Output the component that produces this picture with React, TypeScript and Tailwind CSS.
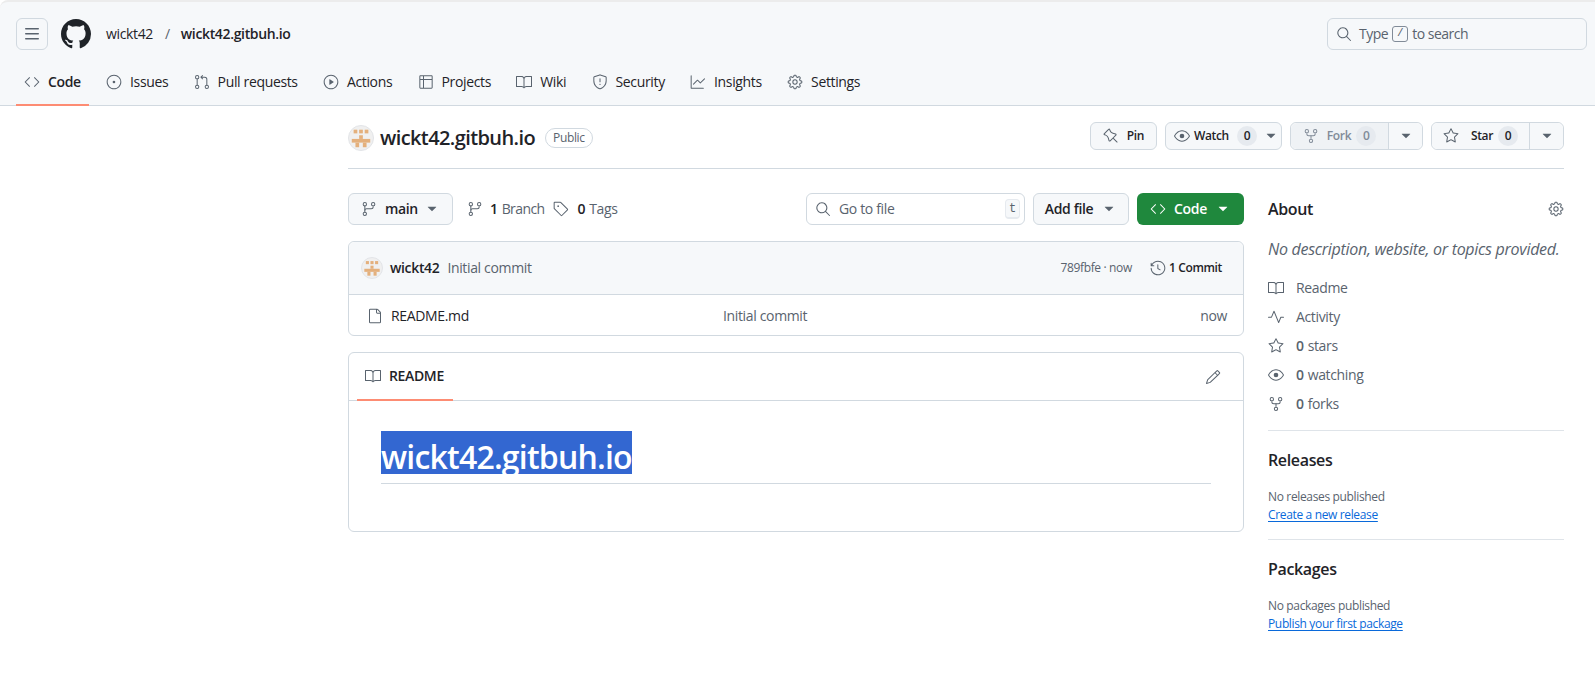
import {
  GoBook,
  GoCode,
  GoEye,
  GoFile,
  GoGear,
  GoGitBranch,
  GoGitPullRequest,
  GoGraph,
  GoHistory,
  GoIssueOpened,
  GoPencil,
  GoPin,
  GoPlay,
  GoPulse,
  GoRepoForked,
  GoSearch,
  GoShield,
  GoStar,
  GoTable,
  GoTag,
  GoTriangleDown,
} from 'react-icons/go';

const tabs = [
  { label: 'Code', icon: GoCode, active: true },
  { label: 'Issues', icon: GoIssueOpened },
  { label: 'Pull requests', icon: GoGitPullRequest },
  { label: 'Actions', icon: GoPlay },
  { label: 'Projects', icon: GoTable },
  { label: 'Wiki', icon: GoBook },
  { label: 'Security', icon: GoShield },
  { label: 'Insights', icon: GoGraph },
  { label: 'Settings', icon: GoGear },
];

const aboutRows = [
  { icon: GoBook, count: '', label: 'Readme' },
  { icon: GoPulse, count: '', label: 'Activity' },
  { icon: GoStar, count: '0', label: 'stars' },
  { icon: GoEye, count: '0', label: 'watching' },
  { icon: GoRepoForked, count: '0', label: 'forks' },
];

function GithubMark() {
  return (
    <svg viewBox="0 0 16 16" fill="currentColor" className="mr-[15px] ml-[13px] h-[30px] w-[30px] text-[#1f2328]">
      <path d="M8 0C3.58 0 0 3.58 0 8c0 3.54 2.29 6.53 5.47 7.59.4.07.55-.17.55-.38 0-.19-.01-.82-.01-1.49-2.01.37-2.53-.49-2.69-.94-.09-.23-.48-.94-.82-1.13-.28-.15-.68-.52-.01-.53.63-.01 1.08.58 1.23.82.72 1.21 1.87.87 2.33.66.07-.52.28-.87.51-1.07-1.78-.2-3.64-.89-3.64-3.95 0-.87.31-1.59.82-2.15-.08-.2-.36-1.02.08-2.12 0 0 .67-.21 2.2.82.64-.18 1.32-.27 2-.27.68 0 1.36.09 2 .27 1.53-1.04 2.2-.82 2.2-.82.44 1.1.16 1.92.08 2.12.51.56.82 1.27.82 2.15 0 3.07-1.87 3.75-3.65 3.95.29.25.54.73.54 1.48 0 1.07-.01 1.93-.01 2.2 0 .21.15.46.55.38A8.013 8.013 0 0016 8c0-4.42-3.58-8-8-8z" />
    </svg>
  );
}

function Avatar({ size }: { size: string }) {
  return (
    <svg viewBox="0 0 26 26" className={`${size} shrink-0 rounded-full border border-[#e3e5e8] bg-[#f0f0f0]`}>
      <g fill="#e4b07c">
        <rect x="5" y="4" width="4" height="4" />
        <rect x="11" y="4" width="4" height="4" />
        <rect x="17" y="4" width="4" height="4" />
        <rect x="11" y="10" width="4" height="4" />
        <rect x="3" y="14" width="20" height="4" />
        <rect x="7" y="18" width="4" height="5" />
        <rect x="15" y="18" width="4" height="5" />
      </g>
    </svg>
  );
}

function Counter({ muted }: { muted?: boolean }) {
  return (
    <span
      className={`flex h-5 w-5 items-center justify-center rounded-full bg-[#e6eaef] text-xs font-semibold ${
        muted ? 'text-[#818b98]' : 'text-[#1f2328]'
      }`}
    >
      0
    </span>
  );
}

function Caret({ className = 'text-[#59636e]' }: { className?: string }) {
  return <GoTriangleDown className={`h-4 w-4 ${className}`} />;
}

export default function App() {
  return (
    <div className="h-[687px] overflow-hidden bg-white font-['Open_Sans','Noto_Sans',sans-serif] text-sm tracking-[-0.35px] text-[#1f2328]">
      {/* Top bar */}
      <header className="h-[106px] rounded-tl-lg border-t-2 border-b border-t-[#ececec] border-b-[#d1d9e0] bg-[#f6f8fa]">
        <div className="mt-4 flex h-8 items-center justify-between pr-2 pl-4">
          <div className="flex items-center">
            <button className="flex h-8 w-8 items-center justify-center rounded-md border border-[#d1d9e0] text-[#59636e]">
              <svg viewBox="0 0 16 16" fill="currentColor" className="h-4 w-4">
                <path d="M1 2.75A.75.75 0 0 1 1.75 2h12.5a.75.75 0 0 1 0 1.5H1.75A.75.75 0 0 1 1 2.75Zm0 5A.75.75 0 0 1 1.75 7h12.5a.75.75 0 0 1 0 1.5H1.75A.75.75 0 0 1 1 7.75ZM1.75 12h12.5a.75.75 0 0 1 0 1.5H1.75a.75.75 0 0 1 0-1.5Z" />
              </svg>
            </button>
            <GithubMark />
            <span>wickt42</span>
            <span className="mr-[11px] ml-[12px] text-[#59636e]">/</span>
            <span className="font-semibold">wickt42.gitbuh.io</span>
          </div>
          <div className="flex h-8 w-[260px] items-center rounded-md border border-[#d1d9e0] pl-2 tracking-[-0.5px] text-[#59636e]">
            <GoSearch className="mr-[7px] h-4 w-4" />
            <span>Type</span>
            <kbd className="mx-1 flex h-4 w-4 items-center justify-center rounded-[3px] border border-[#818b98] text-[11px] font-normal">/</kbd>
            <span>to search</span>
          </div>
        </div>
        <nav className="mt-2 flex h-12 gap-[9.25px] pl-4">
          {tabs.map(({ label, icon: Icon, active }) => (
            <a
              key={label}
              className={`flex items-center gap-2 border-b-2 px-2 pt-[2px] ${
                active ? 'border-[#fd8c73] font-semibold' : 'border-transparent'
              }`}
            >
              <Icon className="h-4 w-4 text-[#59636e]" />
              {label}
            </a>
          ))}
        </nav>
      </header>

      <main className="ml-[348px] w-[1216px]">
        {/* Repo title */}
        <div className="flex items-start justify-between border-b border-[#d1d9e0] pt-[19px] pb-4">
          <div className="-mt-px flex h-7 items-center">
            <Avatar size="h-[26px] w-[26px]" />
            <span className="ml-[6px] text-xl font-semibold tracking-[-0.6px]">wickt42.gitbuh.io</span>
            <span className="ml-[10px] rounded-full border border-[#d1d9e0] px-[7px] text-xs leading-[18px] font-medium text-[#59636e]">
              Public
            </span>
          </div>
          <div className="-mt-[3px] flex h-7 gap-2 text-xs font-semibold">
            <button className="flex w-[67px] items-center justify-center gap-2 rounded-md border border-[#d1d9e0] bg-[#f6f8fa]">
              <GoPin className="h-4 w-4 text-[#59636e]" />
              Pin
            </button>
            <button className="flex w-[117px] items-center gap-1 rounded-md border border-[#d1d9e0] bg-[#f6f8fa] pl-2">
              <GoEye className="h-4 w-4 text-[#59636e]" />
              Watch
              <span className="mr-[2px] ml-1">
                <Counter />
              </span>
              <Caret />
            </button>
            <div className="flex w-[133px] rounded-md border border-[#d1d9e0]">
              <button className="flex flex-1 items-center justify-center gap-2 rounded-l-md border-r border-[#d1d9e0] bg-[#eff2f5] text-[#818b98]">
                <GoRepoForked className="h-4 w-4" />
                Fork
                <span className="-ml-[3px]">
                  <Counter muted />
                </span>
              </button>
              <button className="flex w-[33px] items-center justify-center rounded-r-md bg-[#f6f8fa]">
                <Caret />
              </button>
            </div>
            <div className="flex w-[133px] rounded-md border border-[#d1d9e0]">
              <button className="flex flex-1 items-center justify-center gap-2 rounded-l-md border-r border-[#d1d9e0] bg-[#f6f8fa]">
                <GoStar className="mr-1 h-4 w-4 text-[#59636e]" />
                Star
                <span className="-ml-[3px]">
                  <Counter />
                </span>
              </button>
              <button className="flex w-[33px] items-center justify-center rounded-r-md bg-[#f6f8fa]">
                <Caret />
              </button>
            </div>
          </div>
        </div>

        <div className="mt-6 flex gap-6">
          {/* Main column */}
          <section className="w-[896px]">
            <div className="flex h-8 items-center">
              <button className="flex h-8 w-[105px] items-center rounded-md border border-[#d1d9e0] bg-[#f6f8fa] pl-3 font-semibold">
                <GoGitBranch className="mr-2 h-4 w-4 text-[#59636e]" />
                main
                <Caret className="ml-[6px] text-[#59636e]" />
              </button>
              <GoGitBranch className="ml-[14px] h-4 w-4 text-[#59636e]" />
              <span className="ml-[7px] font-semibold">1</span>
              <span className="ml-1 tracking-[-0.6px] text-[#59636e]">Branch</span>
              <GoTag className="ml-[9px] h-4 w-4 text-[#59636e]" />
              <span className="ml-[8px] font-semibold">0</span>
              <span className="ml-1 text-[#59636e]">Tags</span>
              <div className="ml-auto flex h-8 w-[219px] items-center rounded-md border border-[#d1d9e0] pr-1 pl-2 text-[#59636e]">
                <GoSearch className="mr-2 h-4 w-4" />
                Go to file
                <kbd className="ml-auto flex h-5 w-[15px] items-center justify-center rounded-[4px] border border-b-2 border-[#e6eaef] bg-[#f6f8fa] font-['Liberation_Mono',monospace] text-xs">
                  t
                </kbd>
              </div>
              <button className="ml-2 flex h-8 w-[96px] items-center justify-center gap-2 rounded-md border border-[#d1d9e0] bg-[#f6f8fa] font-semibold">
                Add file
                <Caret />
              </button>
              <button className="ml-2 flex h-8 w-[107px] items-center justify-center gap-2 rounded-md bg-[#1f883d] font-semibold text-white">
                <GoCode className="h-4 w-4" />
                Code
                <Caret className="text-white" />
              </button>
            </div>

            {/* File table */}
            <div className="mt-4 rounded-md border border-[#d1d9e0]">
              <div className="flex h-[53px] items-center rounded-t-md border-b border-[#d1d9e0] bg-[#f6f8fa] pr-[21px] pl-3">
                <Avatar size="h-[22px] w-[22px]" />
                <span className="ml-[7px] font-semibold">wickt42</span>
                <span className="ml-2 text-[#59636e]">Initial commit</span>
                <span className="ml-auto text-xs text-[#59636e]">789fbfe · now</span>
                <GoHistory className="mr-[3px] ml-[18px] h-4 w-4 text-[#59636e]" />
                <span className="text-xs font-semibold">1 Commit</span>
              </div>
              <div className="flex h-[40px] items-center pt-px pr-4 pl-[18px]">
                <GoFile className="h-4 w-4 text-[#59636e]" />
                <span className="ml-[8px] w-[332px]">README.md</span>
                <span className="text-[#59636e]">Initial commit</span>
                <span className="ml-auto text-[#59636e]">now</span>
              </div>
            </div>

            {/* README */}
            <div className="mt-[16px] h-[180px] rounded-md border border-[#d1d9e0]">
              <div className="flex h-[48px] items-start justify-between border-b border-[#d1d9e0] pr-[22px] pl-2">
                <div className="flex h-[48px] w-[96px] items-center gap-2 border-b-2 border-[#fd8c73] pl-2 font-semibold">
                  <GoBook className="h-4 w-4 text-[#59636e]" />
                  README
                </div>
                <GoPencil className="mt-4 h-4 w-4 text-[#59636e]" />
              </div>
              <div className="mx-8 mt-[30px] border-b border-[#d1d9e0] pb-[9px]">
                <span className="inline-flex h-[43px] items-center bg-[#3367d1] pt-2 text-[32px] font-semibold tracking-[-0.8px] text-white">
                  wickt42.gitbuh.io
                </span>
              </div>
            </div>
          </section>

          {/* Sidebar */}
          <aside className="w-[296px]">
            <div className="flex items-center justify-between pt-1">
              <h2 className="text-base leading-6 font-semibold">About</h2>
              <GoGear className="h-4 w-4 text-[#59636e]" />
            </div>
            <p className="mt-4 text-base leading-6 tracking-[-0.28px] whitespace-nowrap text-[#59636e] italic">
              No description, website, or topics provided.
            </p>
            <ul className="mt-3">
              {aboutRows.map(({ icon: Icon, count, label }) => (
                <li key={label} className="flex h-[29px] items-center text-[#59636e]">
                  <Icon className="mr-3 h-4 w-4" />
                  {count && <span className="mr-1 font-semibold">{count}</span>}
                  {label}
                </li>
              ))}
            </ul>
            <div className="mt-3 border-t border-[#d1d9e0]/70 pt-[17px]">
              <h2 className="text-base leading-6 font-semibold">Releases</h2>
              <p className="mt-4 text-xs leading-[18px] text-[#59636e]">No releases published</p>
              <a className="block w-fit text-xs leading-[18px] text-[#0969da] underline underline-offset-2 [text-decoration-skip-ink:none]">
                Create a new release
              </a>
            </div>
            <div className="mt-[15px] border-t border-[#d1d9e0]/70 pt-[17px]">
              <h2 className="text-base leading-6 font-semibold">Packages</h2>
              <p className="mt-4 text-xs leading-[18px] text-[#59636e]">No packages published</p>
              <a className="block w-fit text-xs leading-[18px] text-[#0969da] underline underline-offset-2 [text-decoration-skip-ink:none]">
                Publish your first package
              </a>
            </div>
          </aside>
        </div>
      </main>
    </div>
  );
}
